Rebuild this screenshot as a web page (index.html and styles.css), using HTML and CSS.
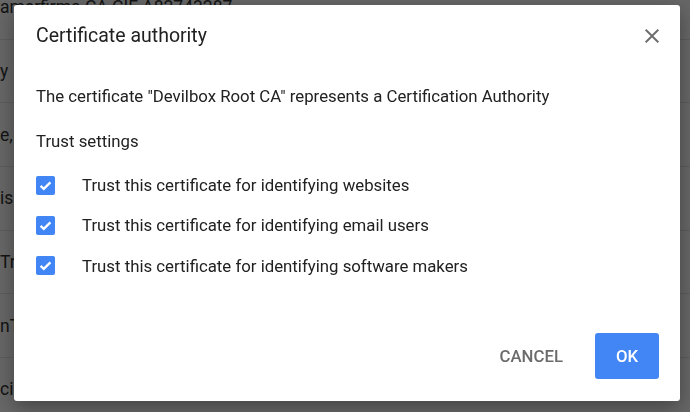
FILE: index.html
```html
<!DOCTYPE html>
<html lang="en">
<head>
<meta charset="utf-8">
<title>Certificate authority</title>
<link rel="stylesheet" href="styles.css">
</head>
<body>
<div class="page">
  <div class="row"><span class="cell">amerfirma CA CIF A82743287</span></div>
  <div class="row"><span class="cell">y</span></div>
  <div class="row"><span class="cell">e, Inc.</span></div>
  <div class="row"><span class="cell">is</span></div>
  <div class="row"><span class="cell">Trust</span></div>
  <div class="row"><span class="cell">nTrust</span></div>
  <div class="row"><span class="cell">cial</span></div>
</div>
<div class="overlay">
  <div class="dialog" role="dialog">
    <div class="header">
      <h2 class="title">Certificate authority</h2>
      <button class="close" aria-label="Close">
        <svg width="24" height="24" viewBox="0 0 24 24"><path fill="#6e6e6e" d="M19 6.41L17.59 5 12 10.59 6.41 5 5 6.41 10.59 12 5 17.590 6.41 19 12 13.41 17.59 19 19 17.59 13.41 12z"/></svg>
      </button>
    </div>
    <p class="desc">The certificate "Devilbox Root CA" represents a Certification Authority</p>
    <p class="section">Trust settings</p>
    <label class="check">
      <svg class="box" width="19" height="19" viewBox="0 0 19 19"><rect width="19" height="19" rx="2" fill="#4285f4"/><path d="M4.6 9.8l3.2 3.1 6.6-6.6" fill="none" stroke="#fff" stroke-width="2.4"/></svg>
      <span>Trust this certificate for identifying websites</span>
    </label>
    <label class="check">
      <svg class="box" width="19" height="19" viewBox="0 0 19 19"><rect width="19" height="19" rx="2" fill="#4285f4"/><path d="M4.6 9.8l3.2 3.1 6.6-6.6" fill="none" stroke="#fff" stroke-width="2.4"/></svg>
      <span>Trust this certificate for identifying email users</span>
    </label>
    <label class="check">
      <svg class="box" width="19" height="19" viewBox="0 0 19 19"><rect width="19" height="19" rx="2" fill="#4285f4"/><path d="M4.6 9.8l3.2 3.1 6.6-6.6" fill="none" stroke="#fff" stroke-width="2.4"/></svg>
      <span>Trust this certificate for identifying software makers</span>
    </label>
    <div class="footer">
      <button class="btn btn-text">CANCEL</button>
      <button class="btn btn-primary">OK</button>
    </div>
  </div>
</div>
</body>
</html>
```
FILE: styles.css
```css
* { box-sizing: border-box; }
html, body { margin: 0; padding: 0; }
body {
  width: 690px;
  height: 412px;
  overflow: hidden;
  background: #fff;
  font-family: Roboto, "Liberation Sans", sans-serif;
}
.page {
  margin-top: -24px;
}
.row {
  height: 63.7px;
  display: flex;
  align-items: center;
  border-bottom: 1px solid #e6e6e6;
  font-size: 17.5px;
  color: #333;
}
.cell {
  margin-left: 0;
  white-space: nowrap;
}
.overlay {
  position: fixed;
  inset: 0;
  background: rgba(0, 0, 0, 0.6);
  padding: 5px 10px 11px 14px;
}
.dialog {
  width: 666px;
  height: 396px;
  background: #fff;
  border-radius: 3px;
  box-shadow: 0 6px 20px rgba(0, 0, 0, 0.35);
  display: flex;
  flex-direction: column;
  padding: 19px 21px 22px 22px;
  color: #212121;
}
.header {
  display: flex;
  align-items: center;
  justify-content: space-between;
  height: 24px;
}
.title {
  margin: 0;
  font-size: 19.5px;
  line-height: 24px;
  font-weight: 400;
  color: #212121;
}
.close {
  border: 0;
  background: none;
  padding: 0;
  width: 24px;
  height: 24px;
  margin-top: 0;
  margin-right: -5px;
  display: flex;
}
.desc {
  margin: 38px 0 0;
  font-size: 16.8px;
  line-height: 20px;
}
.section {
  margin: 25px 0 14px;
  font-size: 16.8px;
  line-height: 20px;
}
.check {
  display: flex;
  align-items: center;
  height: 40.3px;
  font-size: 16.8px;
  line-height: 20px;
}
.box {
  flex: none;
  margin-right: 27px;
}
.footer {
  margin-top: auto;
  display: flex;
  justify-content: flex-end;
  gap: 16px;
}
.btn {
  height: 46px;
  border: 0;
  border-radius: 3px;
  font-family: Roboto, "Liberation Sans", sans-serif;
  font-size: 16.8px;
  font-weight: 500;
  padding: 0 16px;
  min-width: 64px;
}
.btn-text {
  background: none;
  color: #6b6b6b;
}
.btn-primary {
  background: #4285f4;
  color: #fff;
}
```
